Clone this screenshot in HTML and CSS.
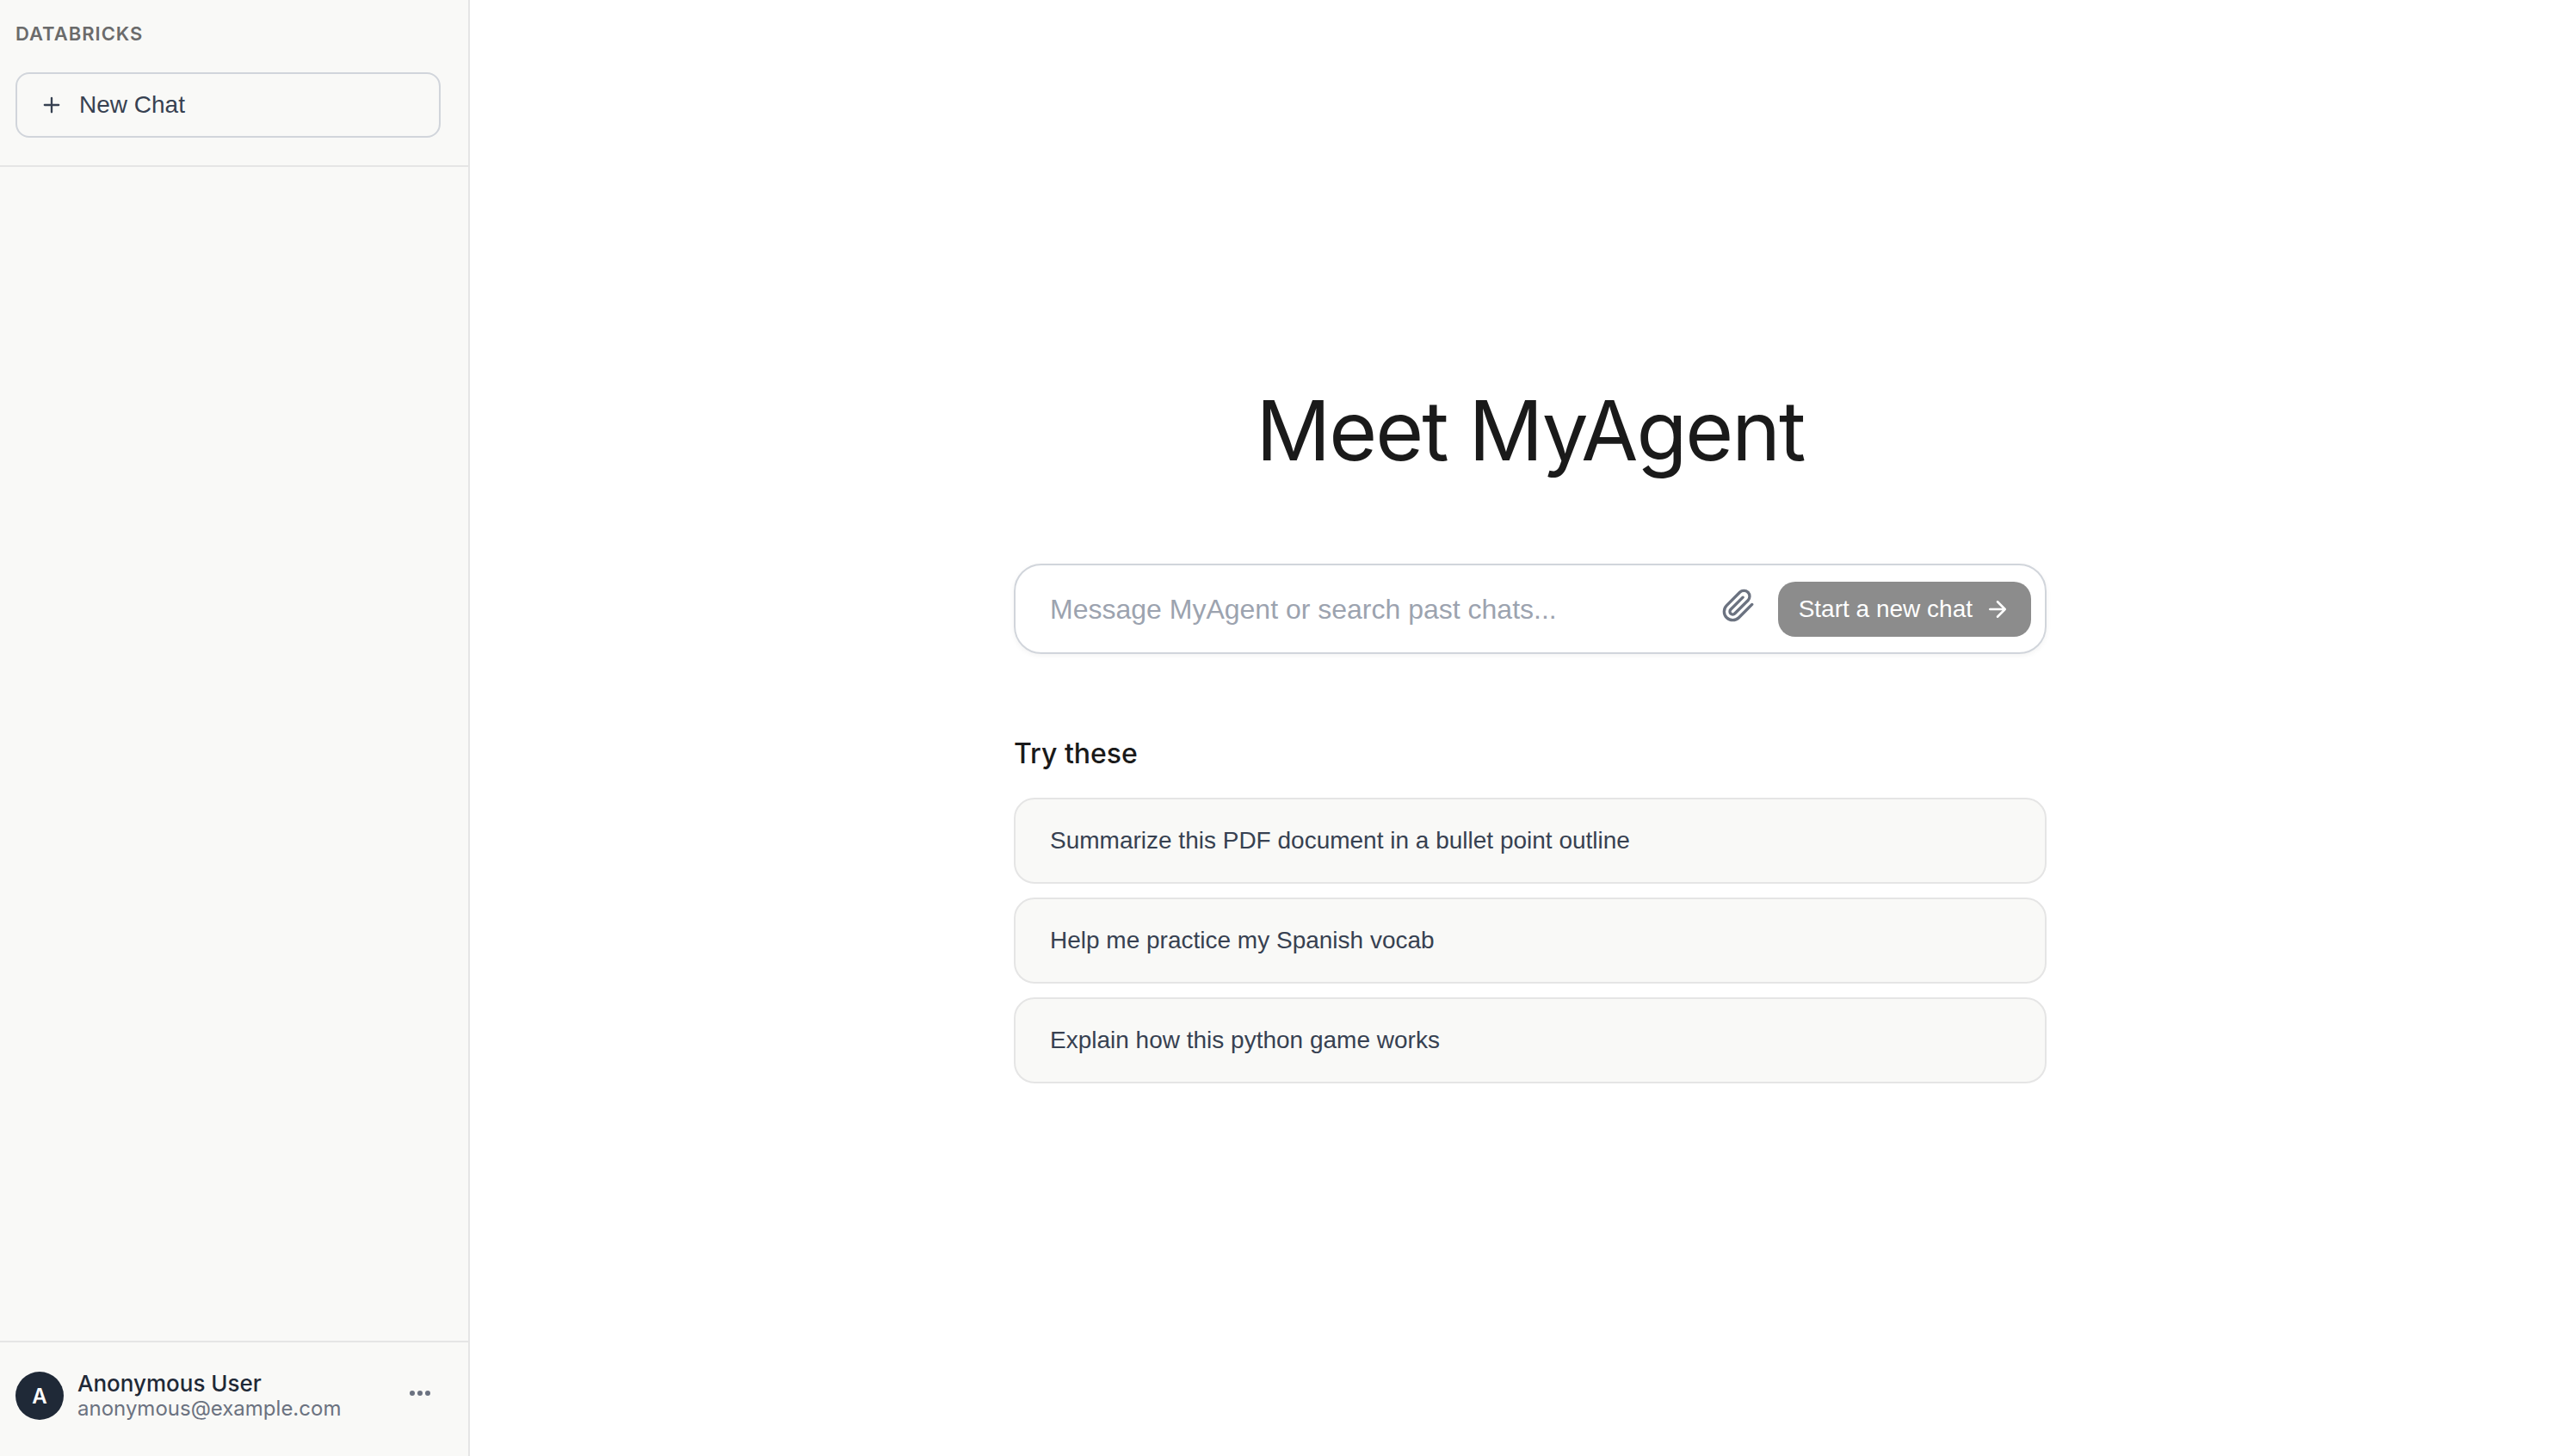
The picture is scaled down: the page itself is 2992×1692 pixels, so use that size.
FILE: index.html
```html
<!DOCTYPE html>
<html lang="en">
<head>
<meta charset="utf-8">
<meta name="viewport" content="width=device-width, initial-scale=1">
<title>MyAgent</title>
<link rel="stylesheet" href="styles.css">
</head>
<body>
<div class="app">
  <aside class="sidebar">
    <header class="sidebar-head">
      <p class="brand">DATABRICKS</p>
      <button class="new-chat" type="button">
        <svg class="icon-plus" viewBox="0 0 24 24" aria-hidden="true"><path d="M12 5v14M5 12h14"/></svg>
        New Chat
      </button>
    </header>
    <nav class="history" aria-label="Chats"></nav>
    <footer class="account">
      <span class="avatar">A</span>
      <div class="identity">
        <span class="user-name">Anonymous User</span>
        <span class="user-email">anonymous@example.com</span>
      </div>
      <button class="more" type="button" aria-label="Account options">
        <svg class="icon-more" viewBox="0 0 32 32" aria-hidden="true"><circle cx="7" cy="16" r="3"/><circle cx="16" cy="16" r="3"/><circle cx="25" cy="16" r="3"/></svg>
      </button>
    </footer>
  </aside>
  <main class="main">
    <div class="welcome">
      <h1 class="title">Meet MyAgent</h1>
      <form class="composer">
        <input class="message" type="text" aria-label="Message" placeholder="Message MyAgent or search past chats...">
        <button class="attach" type="button" aria-label="Attach a file">
          <svg class="icon-clip" viewBox="0 0 24 24" aria-hidden="true"><path d="m21.44 11.05-9.19 9.19a6 6 0 0 1-8.49-8.49l9.19-9.19a4 4 0 0 1 5.66 5.66l-9.2 9.19a2 2 0 0 1-2.83-2.83l8.49-8.48"/></svg>
        </button>
        <button class="start" type="button">
          Start a new chat
          <svg class="icon-arrow" viewBox="0 0 24 24" aria-hidden="true"><path d="M5 12h14M12 5l7 7-7 7"/></svg>
        </button>
      </form>
      <section class="suggestions">
        <h2 class="subtitle">Try these</h2>
        <button class="suggestion" type="button">Summarize this PDF document in a bullet point outline</button>
        <button class="suggestion" type="button">Help me practice my Spanish vocab</button>
        <button class="suggestion" type="button">Explain how this python game works</button>
      </section>
    </div>
  </main>
</div>
</body>
</html>
```
FILE: styles.css
```css
* {
  box-sizing: border-box;
}

body {
  margin: 0;
  background: #fff;
  color: #1a1a1a;
  font-family: Inter, sans-serif;
}

button,
input {
  margin: 0;
  padding: 0;
  border: 0;
  background: none;
  font: 28px/40px "Liberation Sans", Arial, sans-serif;
}

svg {
  flex: none;
  fill: none;
  stroke: currentColor;
  stroke-width: 2;
  stroke-linecap: round;
  stroke-linejoin: round;
}

.app {
  display: flex;
  min-height: 100vh;
}

.sidebar {
  display: flex;
  flex: none;
  flex-direction: column;
  width: 546px;
  border-right: 2px solid #e5e5e5;
  background: #f9f9f7;
}

.sidebar-head {
  padding: 24px 32px 32px 18px;
  border-bottom: 2px solid #e5e5e5;
}

.brand {
  margin: 0 0 30px;
  color: #6b6b6b;
  font-size: 22px;
  font-weight: 600;
  line-height: 30px;
  letter-spacing: 1px;
}

.new-chat {
  display: flex;
  align-items: center;
  gap: 18px;
  width: 100%;
  height: 76px;
  padding: 0 26px;
  border: 2px solid #d1d5db;
  border-radius: 16px;
  color: #374151;
}

.icon-plus {
  width: 28px;
  height: 28px;
}

.icon-arrow {
  width: 30px;
  height: 30px;
}

.history {
  flex: 1;
}

.account {
  display: flex;
  align-items: center;
  gap: 16px;
  padding: 32px 32px 40px 18px;
  border-top: 2px solid #e5e5e5;
}

.avatar {
  display: grid;
  place-items: center;
  width: 56px;
  height: 56px;
  border-radius: 50%;
  background: #1f2937;
  color: #fff;
  font-size: 24px;
  font-weight: 600;
}

.identity {
  display: flex;
  flex: 1;
  flex-direction: column;
  line-height: 28px;
  padding-top: 2px;
}

.user-name {
  color: #1f2937;
  font-size: 26px;
  font-weight: 500;
}

.user-email {
  color: #6b7280;
  font-size: 24px;
  line-height: 30px;
}

.more {
  display: grid;
  place-items: center;
  width: 48px;
  height: 48px;
  padding-bottom: 6px;
  color: #6b7280;
}

.icon-more {
  width: 32px;
  height: 32px;
  fill: currentColor;
  stroke: none;
}

.main {
  display: flex;
  flex: 1;
  align-items: center;
  justify-content: center;
  padding-left: 18px;
}

.welcome {
  width: 100%;
  max-width: 1200px;
}

.title {
  margin: 0 0 88px;
  font-size: 96px;
  font-weight: 400;
  line-height: 134px;
  letter-spacing: -2px;
  text-align: center;
}

.composer {
  display: flex;
  align-items: center;
  height: 105px;
  margin-bottom: 96px;
  padding: 0 16px 0 40px;
  border: 2px solid #d1d5db;
  border-radius: 32px;
  box-shadow: 0 2px 6px rgb(0 0 0 / 5%);
}

.message {
  flex: 1;
  min-width: 0;
  color: #1a1a1a;
  font-size: 32px;
}

.message::placeholder {
  color: #9ca3af;
  opacity: 1;
}

.attach {
  display: grid;
  place-items: center;
  width: 64px;
  height: 64px;
  margin-right: 14px;
  padding-bottom: 8px;
  color: #6b7280;
}

.icon-clip {
  width: 40px;
  height: 40px;
}

.start {
  display: flex;
  align-items: center;
  gap: 14px;
  height: 64px;
  padding: 0 24px;
  border-radius: 20px;
  background: #8c8c8c;
  color: #fff;
}

.suggestions {
  display: flex;
  flex-direction: column;
  gap: 16px;
}

.subtitle {
  margin: 0 0 15px;
  font-size: 32px;
  font-weight: 500;
  line-height: 40px;
}

.suggestion {
  height: 100px;
  padding: 0 40px;
  border: 2px solid #e5e5e5;
  border-radius: 24px;
  background: #f9f9f7;
  color: #374151;
  text-align: left;
}
```
